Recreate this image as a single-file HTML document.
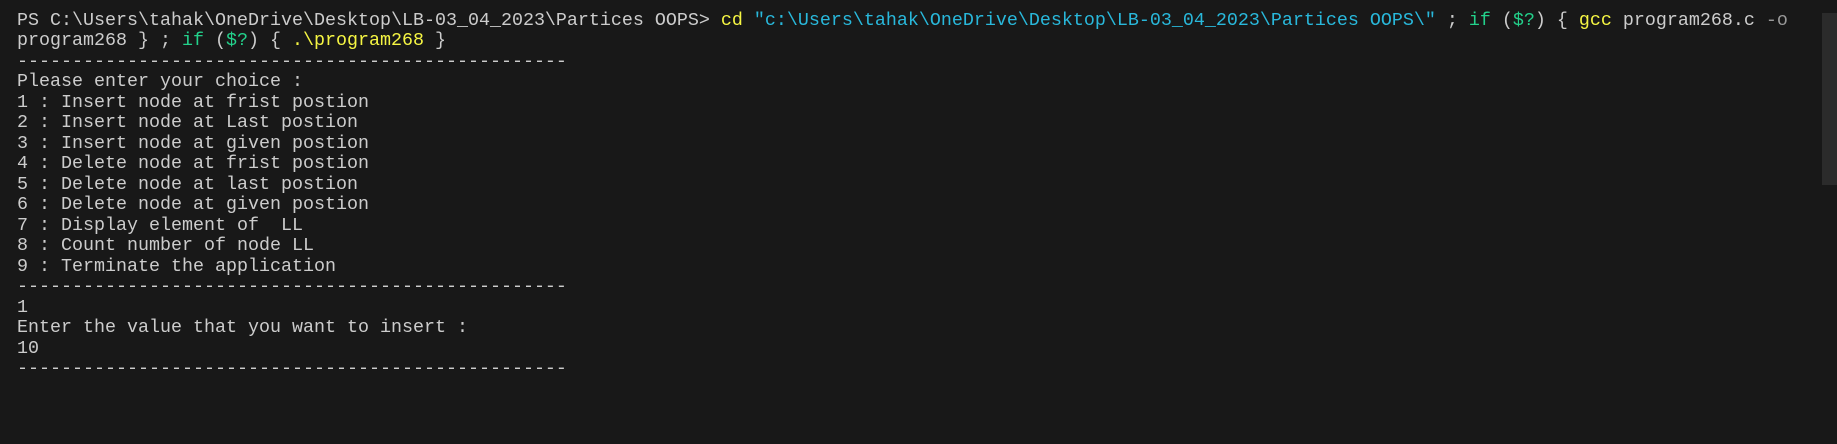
<!DOCTYPE html>
<html><head><meta charset="utf-8"><style>
html,body{margin:0;padding:0;background:#181818;width:1837px;height:444px;overflow:hidden}
pre{margin:0;position:absolute;left:17px;top:11px;font-family:"Liberation Mono",monospace;font-size:18.33px;line-height:20.47px;color:#cccccc;white-space:pre}
.c{color:#29b8db}.g{color:#23d18b}.y{color:#f5f543}.d{color:#999}
.sb{position:absolute;left:1822px;top:13px;width:15px;height:172px;background:#2b2b2b}
</style></head><body>
<pre>PS C:\Users\tahak\OneDrive\Desktop\LB-03_04_2023\Partices OOPS&gt; <span class="y">cd</span> <span class="c">"c:\Users\tahak\OneDrive\Desktop\LB-03_04_2023\Partices OOPS\"</span> ; <span class="g">if</span> (<span class="g">$?</span>) { <span class="y">gcc</span> program268.c <span class="d">-o</span>
program268 } ; <span class="g">if</span> (<span class="g">$?</span>) { <span class="y">.\program268</span> }
--------------------------------------------------
Please enter your choice :
1 : Insert node at frist postion
2 : Insert node at Last postion
3 : Insert node at given postion
4 : Delete node at frist postion
5 : Delete node at last postion
6 : Delete node at given postion
7 : Display element of  LL
8 : Count number of node LL
9 : Terminate the application
--------------------------------------------------
1
Enter the value that you want to insert :
10
--------------------------------------------------</pre>
<div class="sb"></div>
</body></html>
